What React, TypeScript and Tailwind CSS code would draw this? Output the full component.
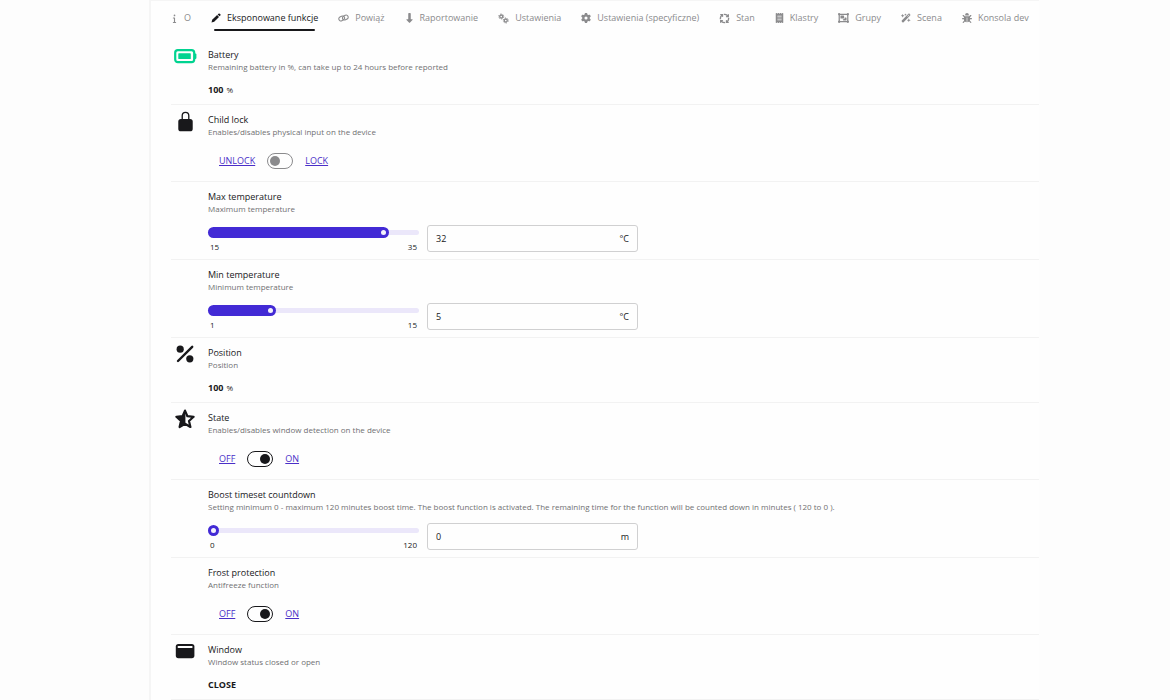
import React, { useState } from 'react';
import type { IconType } from 'react-icons';
import {
  FaArrowsSpin,
  FaBug,
  FaDownLong,
  FaGear,
  FaInfo,
  FaObjectGroup,
  FaReceipt,
  FaWandMagicSparkles,
} from 'react-icons/fa6';
import { IoLockClosed } from 'react-icons/io5';

type IconProps = { className?: string };

function PenIcon({ className }: IconProps) {
  return (
    <svg viewBox="0 0 20 20" fill="currentColor" className={className}>
      <path d="M1 19l1.4-5.4L12.2 4l3.8 3.8-9.6 9.8z" />
      <path d="M13.3 2.9l1.7-1.6q1.3-1 2.5.1l1.2 1.2q1 1.2 0 2.4l-1.7 1.7z" />
    </svg>
  );
}

function ChainIcon({ className }: IconProps) {
  return (
    <svg viewBox="0 0 24 20" fill="none" stroke="currentColor" strokeWidth="2.4" className={className}>
      <rect x="1.5" y="6.5" width="13" height="9" rx="4.5" transform="rotate(-28 8 11)" />
      <rect x="9.5" y="4.5" width="13" height="9" rx="4.5" transform="rotate(-28 16 9)" />
    </svg>
  );
}

function GearsIcon({ className }: IconProps) {
  return (
    <svg viewBox="0 0 22 20" fill="none" stroke="currentColor" className={className}>
      <circle cx="6.5" cy="6" r="3" strokeWidth="2.6" />
      <circle cx="6.5" cy="6" r="5" strokeWidth="2" strokeDasharray="2.6 2.636" />
      <circle cx="15.5" cy="14" r="3" strokeWidth="2.6" />
      <circle cx="15.5" cy="14" r="5" strokeWidth="2" strokeDasharray="2.6 2.636" />
    </svg>
  );
}

function BatteryIcon() {
  return (
    <svg viewBox="0 0 24 20" className="h-5 w-6 shrink-0 text-[#00d390]" fill="currentColor">
      <rect x="2.2" y="4.2" width="19" height="12" rx="2.6" fill="none" stroke="currentColor" strokeWidth="2.2" />
      <rect x="5.3" y="7.3" width="12.5" height="5.8" rx="0.6" />
      <path d="M22 7.5h.4q1 0 1 1v3.4q0 1-1 1H22z" />
    </svg>
  );
}

function PercentIcon() {
  return (
    <svg viewBox="0 0 20 20" className="size-5" fill="currentColor">
      <circle cx="5.2" cy="5.2" r="3.6" />
      <circle cx="14.8" cy="14.8" r="3.6" />
      <path d="M3 17 17.2 2.8" stroke="currentColor" strokeWidth="2.4" strokeLinecap="round" />
    </svg>
  );
}

function HalfStarIcon() {
  return (
    <svg viewBox="0 0 20 20" className="size-5" fill="currentColor">
      <path
        d="m10 1.6 2.4 5.6 6.2.6-4.6 4.2 1.4 6-5.4-3.2L4.6 18 6 12 1.4 7.8l6.2-.6z"
        fill="none"
        stroke="currentColor"
        strokeWidth="2.2"
        strokeLinejoin="round"
      />
      <path d="M10.4 1.6v13.2L4.6 18 6 12 1.4 7.8l6.2-.6z" />
    </svg>
  );
}

function WindowIcon() {
  return (
    <svg viewBox="0 0 20 20" className="size-5">
      <rect x="0.8" y="3" width="18.6" height="14.2" rx="2.6" fill="currentColor" />
      <rect x="2.6" y="4.9" width="15" height="2.1" rx="0.8" fill="#fefefe" />
    </svg>
  );
}

type Tab = { label: string; icon: IconType | React.FC<IconProps>; size: string };

const tabs: Tab[] = [
  { label: 'O', icon: FaInfo, size: 'h-[9px] w-[7px]' },
  { label: 'Eksponowane funkcje', icon: PenIcon, size: 'size-[10px]' },
  { label: 'Powiąż', icon: ChainIcon, size: 'h-[10px] w-[11px]' },
  { label: 'Raportowanie', icon: FaDownLong, size: 'h-[10px] w-[9px]' },
  { label: 'Ustawienia', icon: GearsIcon, size: 'h-[11px] w-[11px]' },
  { label: 'Ustawienia (specyficzne)', icon: FaGear, size: 'size-[10px]' },
  { label: 'Stan', icon: FaArrowsSpin, size: 'size-[11px]' },
  { label: 'Klastry', icon: FaReceipt, size: 'h-[10px] w-[9px]' },
  { label: 'Grupy', icon: FaObjectGroup, size: 'h-[10px] w-[11px]' },
  { label: 'Scena', icon: FaWandMagicSparkles, size: 'size-[10px]' },
  { label: 'Konsola dev', icon: FaBug, size: 'size-[10px]' },
];

type RowProps = {
  title: string;
  description: string;
  icon?: React.ReactNode;
  children: React.ReactNode;
};

function FeatureRow({ title, description, icon, children }: RowProps) {
  return (
    <li className="flex gap-[9px] border-b border-[#f2f2f2] pr-2">
      <div className="flex w-7 shrink-0 justify-center pt-[6px] text-[#18181b]">{icon}</div>
      <div className="min-w-0 grow pt-2">
        <h2 className="text-[9px] leading-[13px] text-[#18181b]">{title}</h2>
        <p className="text-[8px] leading-3 text-[#707072]">{description}</p>
        {children}
      </div>
    </li>
  );
}

function Value({ value, unit }: { value: string; unit?: string }) {
  return (
    <div className="pt-[10px] pb-[7px] text-[9px] leading-[14px] text-[#18181b]">
      <strong className="font-bold">{value}</strong>
      {unit && <small className="ml-[3px] text-[8px]">{unit}</small>}
    </div>
  );
}

type ToggleProps = { label: string; off: string; on: string; initial: boolean };

function Toggle({ label, off, on, initial }: ToggleProps) {
  const [checked, setChecked] = useState(initial);
  const link = 'cursor-pointer text-[9px] leading-4 text-[#4a2fc8] underline';

  return (
    <div className="flex items-center gap-3 pt-[15px] pb-3 pl-[11px]">
      <button type="button" className={link} onClick={() => setChecked(false)}>
        {off}
      </button>
      <input
        type="checkbox"
        role="switch"
        aria-label={label}
        checked={checked}
        onChange={(e) => setChecked(e.target.checked)}
        className="h-4 w-[26px] shrink-0 cursor-pointer appearance-none rounded-full border border-[#8b8b8d] p-[2px] before:block before:size-[10px] before:rounded-full before:bg-[#8b8b8d] checked:border-[#18181b] checked:before:translate-x-[10px] checked:before:bg-[#18181b]"
      />
      <button type="button" className={link} onClick={() => setChecked(true)}>
        {on}
      </button>
    </div>
  );
}

type RangeProps = { label: string; min: number; max: number; initial: number; unit: string };

function Range({ label, min, max, initial, unit }: RangeProps) {
  const [value, setValue] = useState(initial);
  const ratio = Math.min(1, Math.max(0, (value - min) / (max - min)));

  return (
    <div className="flex items-start gap-2 pt-[10px] pb-[6px]">
      <div className="w-[211px] pt-[2px]">
        <div className="grid items-center">
          <div className="col-start-1 row-start-1 h-[5px] rounded-full bg-[#ebe7fa]" />
          <div
            className="col-start-1 row-start-1 flex h-[11px] items-center justify-end rounded-full bg-[#422ad5] pr-[3px]"
            style={{ width: `calc(11px + (100% - 11px) * ${ratio})` }}
          >
            <span className="size-[5px] rounded-full bg-[#f3f1fc]" />
          </div>
          <input
            type="range"
            aria-label={label}
            min={min}
            max={max}
            value={value}
            onChange={(e) => setValue(Number(e.target.value))}
            className="col-start-1 row-start-1 h-[11px] w-full cursor-pointer opacity-0"
          />
        </div>
        <div className="flex justify-between px-[2px] pt-[3px] text-[8px] leading-3 text-[#18181b]">
          <span>{min}</span>
          <span>{max}</span>
        </div>
      </div>
      <label className="flex h-[27px] w-[211px] items-center rounded-[3px] border border-[#d0d0d1] px-2 text-[9px] text-[#18181b]">
        <input
          type="text"
          inputMode="numeric"
          aria-label={`${label} value`}
          value={value}
          onChange={(e) => setValue(Number(e.target.value) || 0)}
          className="min-w-0 grow outline-none"
        />
        <span>{unit}</span>
      </label>
    </div>
  );
}

function App() {
  const [active, setActive] = useState('Eksponowane funkcje');

  return (
    <div className="min-h-screen bg-[#fdfdfd] pr-[131px] pl-[149px] font-['Open_Sans',sans-serif]">
      <main className="min-h-screen border-t border-l-2 border-[#f5f5f5] bg-[#fefefe] pl-5">
        <nav className="-ml-[10px] flex h-[39px] items-start pt-[6px]">
          {tabs.map(({ label, icon: Icon, size }) => (
            <button
              key={label}
              type="button"
              onClick={() => setActive(label)}
              className={`flex shrink-0 cursor-pointer flex-col items-center px-[10px] text-[9px] whitespace-nowrap ${
                active === label ? 'text-[#18181b]' : 'text-[#8b8b8d]'
              }`}
            >
              <span className="flex h-[22px] items-center gap-[6px]">
                <Icon className={`shrink-0 ${size}`} />
                {label}
              </span>
              {active === label && <span className="h-[2px] w-[101px] rounded-full bg-[#18181b]" />}
            </button>
          ))}
        </nav>

        <ul>
          <FeatureRow
            title="Battery"
            description="Remaining battery in %, can take up to 24 hours before reported"
            icon={<BatteryIcon />}
          >
            <Value value="100" unit="%" />
          </FeatureRow>
          <FeatureRow
            title="Child lock"
            description="Enables/disables physical input on the device"
            icon={<IoLockClosed className="size-[21px]" />}
          >
            <Toggle label="Child lock" off="UNLOCK" on="LOCK" initial={false} />
          </FeatureRow>
          <FeatureRow title="Max temperature" description="Maximum temperature">
            <Range label="Max temperature" min={15} max={35} initial={32} unit="°C" />
          </FeatureRow>
          <FeatureRow title="Min temperature" description="Minimum temperature">
            <Range label="Min temperature" min={1} max={15} initial={5} unit="°C" />
          </FeatureRow>
          <FeatureRow title="Position" description="Position" icon={<PercentIcon />}>
            <Value value="100" unit="%" />
          </FeatureRow>
          <FeatureRow
            title="State"
            description="Enables/disables window detection on the device"
            icon={<HalfStarIcon />}
          >
            <Toggle label="State" off="OFF" on="ON" initial={true} />
          </FeatureRow>
          <FeatureRow
            title="Boost timeset countdown"
            description="Setting minimum 0 - maximum 120 minutes boost time. The boost function is activated. The remaining time for the function will be counted down in minutes ( 120 to 0 )."
          >
            <Range label="Boost timeset countdown" min={0} max={120} initial={0} unit="m" />
          </FeatureRow>
          <FeatureRow title="Frost protection" description="Antifreeze function">
            <Toggle label="Frost protection" off="OFF" on="ON" initial={true} />
          </FeatureRow>
          <FeatureRow
            title="Window"
            description="Window status closed or open"
            icon={<WindowIcon />}
          >
            <Value value="CLOSE" />
          </FeatureRow>
        </ul>
      </main>
    </div>
  );
}

export default App;
